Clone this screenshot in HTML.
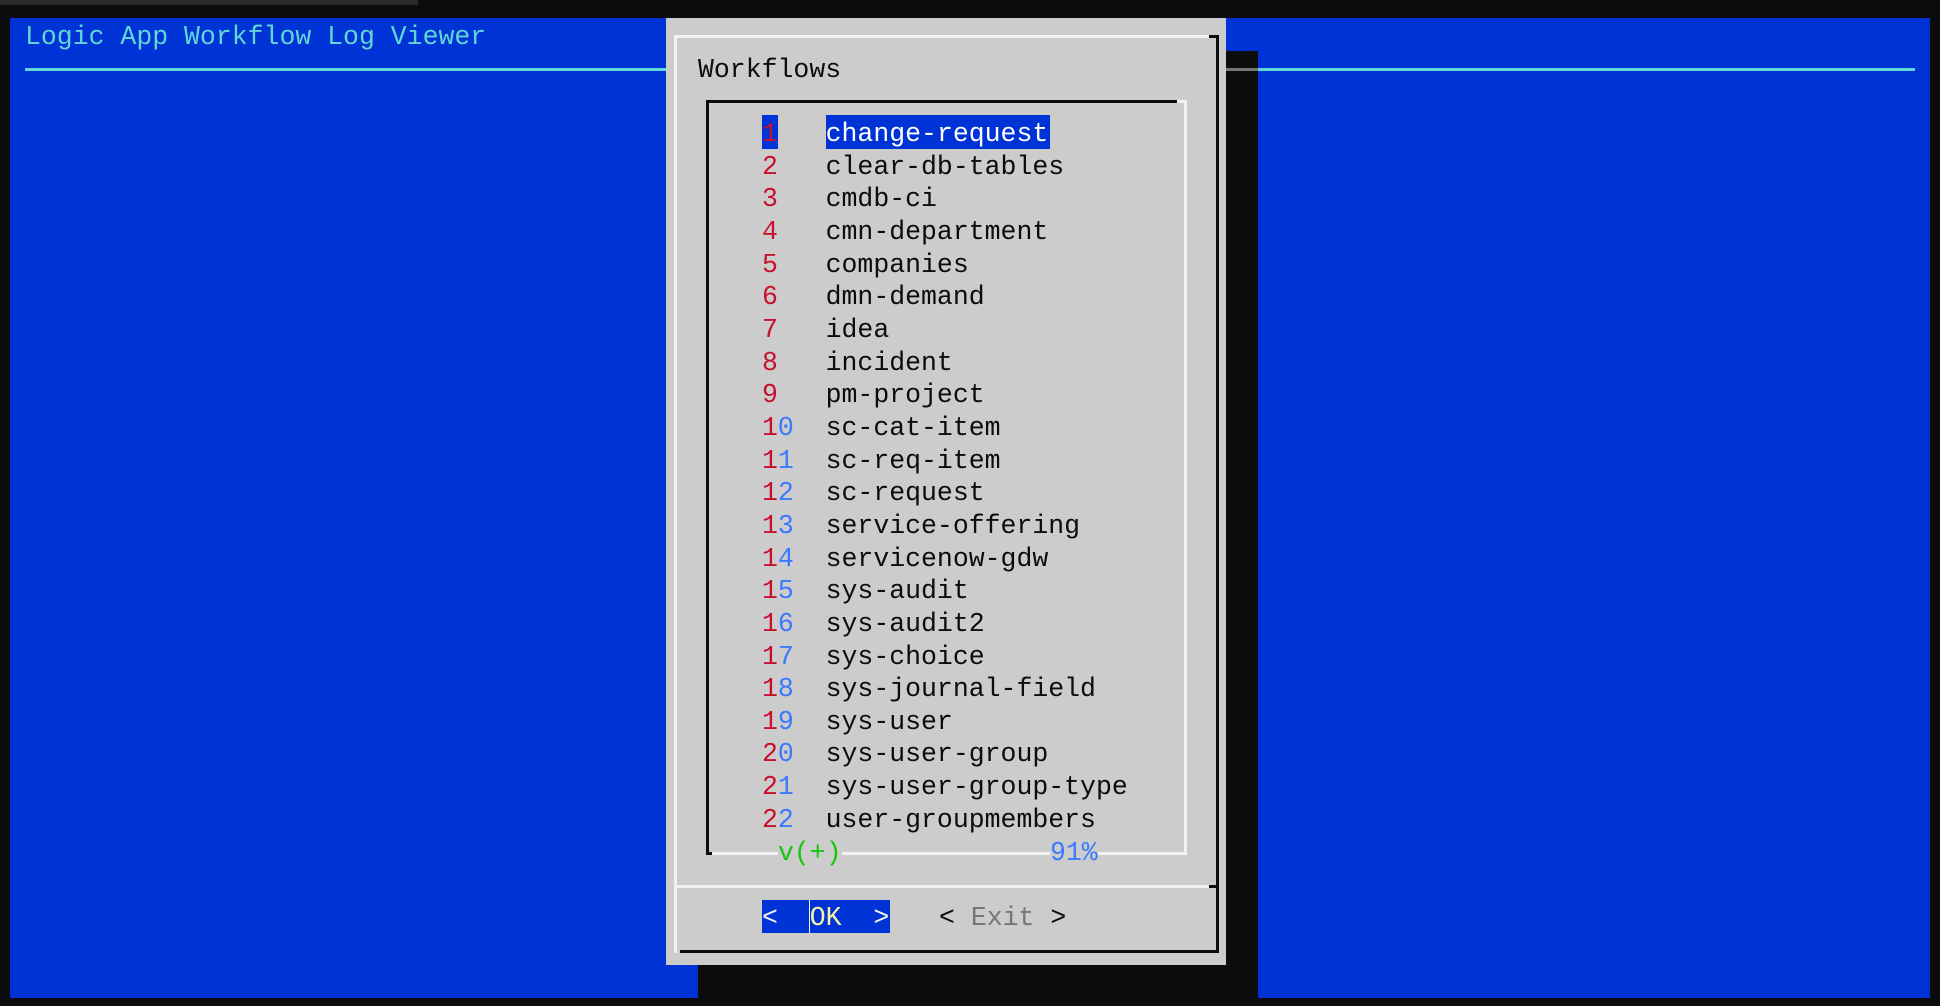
<!DOCTYPE html>
<html><head><meta charset="utf-8"><style>
*{margin:0;padding:0;box-sizing:border-box}
body{width:1940px;height:1006px;background:#0c0c0c;position:relative;overflow:hidden;font-family:"Liberation Mono","DejaVu Sans Mono",monospace;font-size:26.5px}
.a{position:absolute}
.t{white-space:pre;line-height:32.66px}
.r{color:#c8102e}.b{color:#3b78ff}
</style></head><body>
<div class="a" style="left:0;top:0;width:418px;height:5px;background:#2a2a2a"></div>
<div class="a" style="left:10px;top:18px;width:1920px;height:980px;background:#0033d6"></div>
<div class="a t" style="left:25px;top:21px;color:#61d6d6">Logic App Workflow Log Viewer</div>
<div class="a" style="left:25px;top:68px;width:1890px;height:3px;background:#61d6d6"></div>
<!-- shadow -->
<div class="a" style="left:1226px;top:51px;width:32px;height:947px;background:#0c0c0c"></div>
<div class="a" style="left:698px;top:965px;width:560px;height:33px;background:#0c0c0c"></div>
<div class="a" style="left:1226px;top:68px;width:32px;height:3px;background:#767676"></div>
<!-- dialog -->
<div class="a" style="left:666px;top:18px;width:560px;height:947px;background:#cccccc"></div>
<div class="a" style="left:674px;top:35px;width:536px;height:3px;background:#f2f2f2"></div>
<div class="a" style="left:674px;top:35px;width:3px;height:918px;background:#f2f2f2"></div>
<div class="a" style="left:1209px;top:35px;width:10px;height:3px;background:#0c0c0c"></div>
<div class="a" style="left:1216px;top:35px;width:3px;height:918px;background:#0c0c0c"></div>
<div class="a" style="left:680px;top:950px;width:539px;height:3px;background:#0c0c0c"></div>
<div class="a" style="left:677px;top:885px;width:532px;height:3px;background:#f2f2f2"></div>
<div class="a" style="left:1209px;top:885px;width:10px;height:3px;background:#0c0c0c"></div>
<div class="a t" style="left:698px;top:54px;color:#0c0c0c">Workflows</div>
<!-- list box -->
<div class="a" style="left:706px;top:100px;width:471px;height:3px;background:#0c0c0c"></div>
<div class="a" style="left:706px;top:100px;width:3px;height:755px;background:#0c0c0c"></div>
<div class="a" style="left:1177px;top:100px;width:10px;height:3px;background:#f2f2f2"></div>
<div class="a" style="left:1184px;top:100px;width:3px;height:755px;background:#f2f2f2"></div>
<div class="a" style="left:709px;top:852px;width:478px;height:3px;background:#f2f2f2"></div>
<div class="a" style="left:706px;top:852px;width:6px;height:3px;background:#0c0c0c"></div>
<div class="a" style="left:762px;top:115px;width:16px;height:34px;background:#0033d6"></div>
<div class="a" style="left:826px;top:115px;width:224px;height:34px;background:#0033d6"></div>
<div class="a t" style="left:762px;top:118px;color:#0c0c0c"><span class="r">1</span>   <span style="color:#fff">change-request</span>
<span class="r">2</span>   clear-db-tables
<span class="r">3</span>   cmdb-ci
<span class="r">4</span>   cmn-department
<span class="r">5</span>   companies
<span class="r">6</span>   dmn-demand
<span class="r">7</span>   idea
<span class="r">8</span>   incident
<span class="r">9</span>   pm-project
<span class="r">1</span><span class="b">0</span>  sc-cat-item
<span class="r">1</span><span class="b">1</span>  sc-req-item
<span class="r">1</span><span class="b">2</span>  sc-request
<span class="r">1</span><span class="b">3</span>  service-offering
<span class="r">1</span><span class="b">4</span>  servicenow-gdw
<span class="r">1</span><span class="b">5</span>  sys-audit
<span class="r">1</span><span class="b">6</span>  sys-audit2
<span class="r">1</span><span class="b">7</span>  sys-choice
<span class="r">1</span><span class="b">8</span>  sys-journal-field
<span class="r">1</span><span class="b">9</span>  sys-user
<span class="r">2</span><span class="b">0</span>  sys-user-group
<span class="r">2</span><span class="b">1</span>  sys-user-group-type
<span class="r">2</span><span class="b">2</span>  user-groupmembers</div>
<div class="a t" style="left:778px;top:837px;color:#16c60c;background:#cccccc">v(+)</div>
<div class="a t" style="left:1050px;top:837px;color:#3b78ff;background:#cccccc">91%</div>
<!-- buttons -->
<div class="a" style="left:762px;top:900px;width:128px;height:33px;background:#0033d6"></div>
<div class="a" style="left:809px;top:900px;width:1px;height:33px;background:#f2f2f2"></div>
<div class="a t" style="left:762px;top:902px;color:#f2f2f2">&lt;  <span style="color:#f9f1a5">OK</span>  &gt;</div>
<div class="a t" style="left:939px;top:902px;color:#0c0c0c">&lt; <span style="color:#767676">Exit</span> &gt;</div>
</body></html>
